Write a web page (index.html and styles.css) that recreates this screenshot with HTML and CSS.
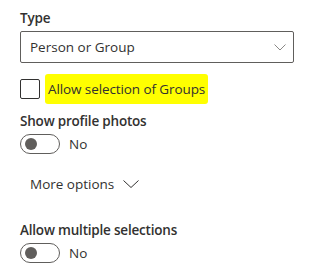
FILE: index.html
```html
<!DOCTYPE html>
<html lang="en">
<head>
    <meta charset="UTF-8">
    <meta name="viewport" content="width=device-width, initial-scale=1.0">
    <title>Column settings</title>
    <link rel="stylesheet" href="styles.css">
</head>
<body>
    <div class="panel">
        <div class="label label-type">Type</div>
        <div class="dropdown">
            <span>Person or Group</span>
            <svg class="chevron" width="12" height="7" viewBox="0 0 12 7"><polyline points="0.5,0.5 6,6 11.5,0.5" fill="none" stroke="#8a8886" stroke-width="1"/></svg>
        </div>

        <div class="checkbox-row">
            <span class="checkbox"></span>
            <span class="highlight">Allow selection of Groups</span>
        </div>

        <div class="label label-photos">Show profile photos</div>
        <div class="toggle-row">
            <span class="toggle"><span class="knob"></span></span>
            <span>No</span>
        </div>

        <div class="more">
            <span>More options</span>
            <svg width="16" height="8" viewBox="0 0 16 8"><polyline points="0.5,0.5 8,7.5 15.5,0.5" fill="none" stroke="#323130" stroke-width="1"/></svg>
        </div>

        <div class="label label-multi">Allow multiple selections</div>
        <div class="toggle-row">
            <span class="toggle"><span class="knob"></span></span>
            <span>No</span>
        </div>
    </div>
</body>
</html>
```
FILE: styles.css
```css
body { margin: 0; background: #fff; font-family: "Open Sans", "Noto Sans", sans-serif; font-size: 13.5px; line-height: 20px; color: #323130; }
.panel { padding: 8px 22px 0 20px; }
.label { font-weight: 600; letter-spacing: -0.2px; }
.label-type { margin-bottom: 3px; }
.label-photos { margin-top: 12px; }
.label-multi { margin-top: 26px; }
.dropdown { height: 32px; box-sizing: border-box; border: 1px solid #605e5c; border-radius: 2px; display: flex; align-items: center; justify-content: space-between; padding: 0 7px 0 9px; }
.checkbox-row { display: flex; align-items: center; margin-top: 16px; height: 20px; }
.checkbox { width: 20px; height: 20px; box-sizing: border-box; border: 1px solid #323130; border-radius: 2px; margin-right: 5px; }
.highlight { background: #ffff00; padding: 5px 3px; border-radius: 3px; letter-spacing: -0.1px; }
.toggle-row { display: flex; align-items: center; gap: 9px; margin-top: 3px; }
.toggle { width: 40px; height: 20px; box-sizing: border-box; border: 1px solid #605e5c; border-radius: 10px; display: flex; align-items: center; padding-left: 4px; }
.knob { width: 12px; height: 12px; border-radius: 50%; background: #605e5c; }
.more { display: flex; align-items: center; gap: 9px; margin-top: 20px; padding-left: 10px; }
```
